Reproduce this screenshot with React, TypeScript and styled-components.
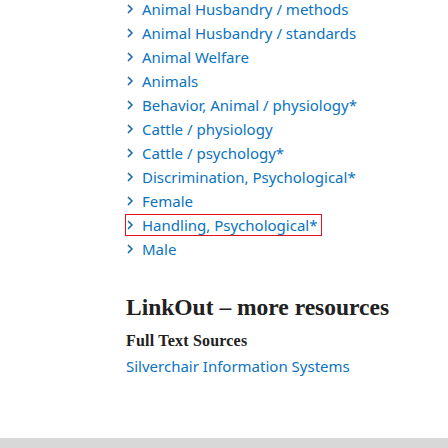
import React from "react";
import styled, { createGlobalStyle } from "styled-components";

const GlobalStyle = createGlobalStyle`
  html, body {
    margin: 0;
    padding: 0;
    background: #fff;
  }
`;

const Page = styled.div`
  width: 448px;
  height: 448px;
  display: flex;
  flex-direction: column;
  overflow: hidden;
`;

const Content = styled.div`
  flex: 1;
  padding-left: 126px;
`;

const TermList = styled.ul`
  list-style: none;
  margin: -3px 0 0;
  padding: 0;
`;

const TermItem = styled.li`
  height: 24px;
  display: flex;
  align-items: center;
`;

const TermLink = styled.a<{ $focused?: boolean }>`
  display: inline-flex;
  align-items: center;
  gap: 9px;
  padding: 0 4px 0 1px;
  margin-left: -1px;
  border: 1.5px solid ${(p) => (p.$focused ? "#e8111b" : "transparent")};
  font-family: "Noto Sans", "Open Sans", sans-serif;
  font-size: 15px;
  color: #0b73c0;
  text-decoration: none;
  white-space: nowrap;
`;

const Chevron = styled.svg`
  width: 6px;
  height: 10px;
  flex-shrink: 0;
  margin-top: -1px;
`;

const Heading = styled.h2`
  margin: 33px 0 0;
  font-family: "Liberation Serif", serif;
  font-weight: 700;
  font-size: 23.5px;
  color: #212121;
`;

const SubHeading = styled.h3`
  margin: 11px 0 0;
  font-family: "Liberation Serif", serif;
  font-weight: 700;
  font-size: 16px;
  letter-spacing: 0.2px;
  color: #212121;
`;

const SourceLink = styled.a`
  display: block;
  margin-top: 6px;
  font-family: "Noto Sans", "Open Sans", sans-serif;
  font-size: 15px;
  color: #0b73c0;
  text-decoration: none;
`;

const Footer = styled.div`
  height: 10px;
  background: #d8d8d8;
`;

const terms = [
  "Animal Husbandry / methods",
  "Animal Husbandry / standards",
  "Animal Welfare",
  "Animals",
  "Behavior, Animal / physiology*",
  "Cattle / physiology",
  "Cattle / psychology*",
  "Discrimination, Psychological*",
  "Female",
  "Handling, Psychological*",
  "Male",
];

function Arrow() {
  return (
    <Chevron viewBox="0 0 6 10">
      <path d="M1 1 L5 5 L1 9" fill="none" stroke="#0b65a8" strokeWidth="1.5" />
    </Chevron>
  );
}

export default function App() {
  return (
    <Page>
      <GlobalStyle />
      <Content>
        <TermList>
          {terms.map((t) => (
            <TermItem key={t}>
              <TermLink href="#" $focused={t.startsWith("Handling")}>
                <Arrow />
                {t}
              </TermLink>
            </TermItem>
          ))}
        </TermList>
        <Heading>LinkOut – more resources</Heading>
        <SubHeading>Full Text Sources</SubHeading>
        <SourceLink href="#">Silverchair Information Systems</SourceLink>
      </Content>
      <Footer />
    </Page>
  );
}
